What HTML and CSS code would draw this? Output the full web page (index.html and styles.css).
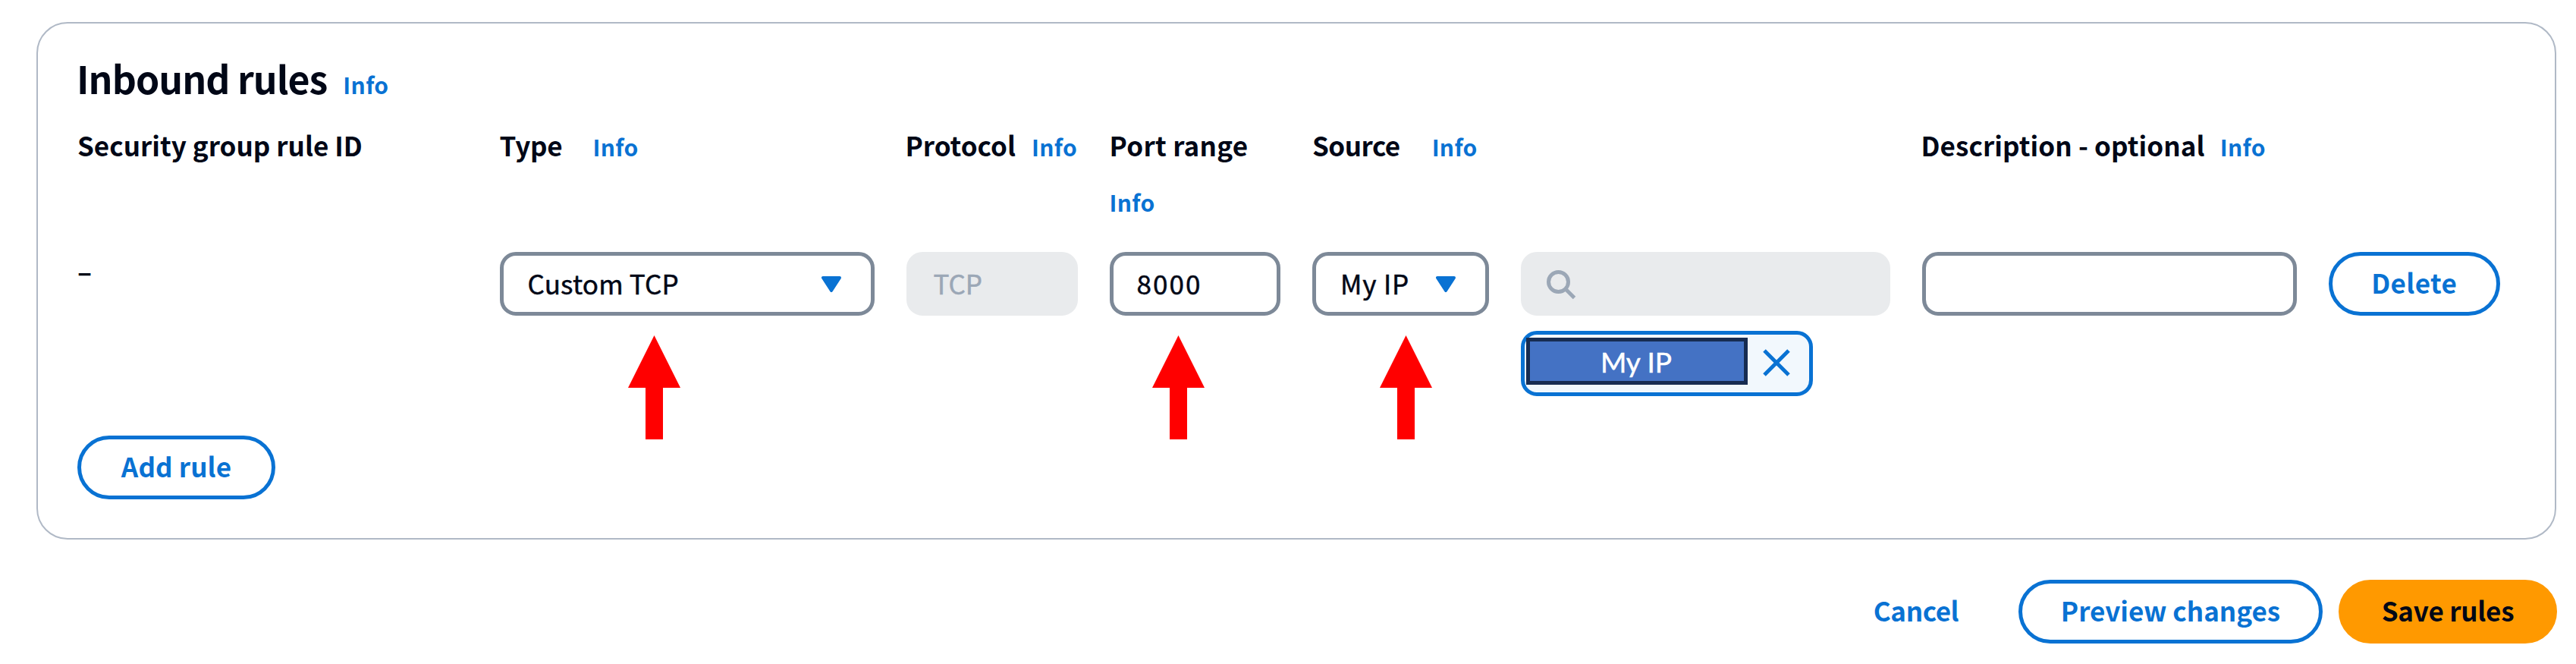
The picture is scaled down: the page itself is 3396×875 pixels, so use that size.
FILE: index.html
```
<!DOCTYPE html>
<html lang="en">
<head>
<meta charset="utf-8">
<title>Edit inbound rules</title>
<link rel="stylesheet" href="styles.css">
</head>
<body>
<main class="page">
  <section class="panel">
    <header class="panel-header">
      <h2 class="title">Inbound rules</h2>
      <a class="info title-info">Info</a>
    </header>

    <div class="grid labels">
      <div class="label label-id">Security group rule ID</div>
      <div class="label"><span class="label-type">Type</span><a class="info info-type">Info</a></div>
      <div class="label"><span class="label-protocol">Protocol</span><a class="info info-protocol">Info</a></div>
      <div class="label"><span class="label-port">Port range</span><a class="info info-port">Info</a></div>
      <div class="label label-wide"><span class="label-source">Source</span><a class="info info-source">Info</a></div>
      <div class="label"><span class="label-description">Description - optional</span><a class="info info-description">Info</a></div>
    </div>

    <div class="grid rule">
      <div class="rule-id">–</div>
      <div class="cell">
        <div class="field select">
          <span class="value-type">Custom TCP</span>
          <svg class="caret" viewBox="0 0 26 21"><path d="M2 2h22L13 19z"/></svg>
        </div>
        <svg class="arrow arrow-type" viewBox="0 0 69 137"><path d="M34.500 0L69 69H46V137H23V69H0z"/></svg>
      </div>
      <div class="cell"><div class="field disabled">TCP</div></div>
      <div class="cell">
        <div class="field"><span class="value-port">8000</span></div>
        <svg class="arrow arrow-port" viewBox="0 0 69 137"><path d="M34.500 0L69 69H46V137H23V69H0z"/></svg>
      </div>
      <div class="cell">
        <div class="field select">
          <span class="value-source">My IP</span>
          <svg class="caret" viewBox="0 0 26 21"><path d="M2 2h22L13 19z"/></svg>
        </div>
        <svg class="arrow arrow-source" viewBox="0 0 69 137"><path d="M34.500 0L69 69H46V137H23V69H0z"/></svg>
      </div>
      <div class="cell">
        <div class="field disabled search">
          <svg class="search-icon" viewBox="0 0 39 39"><circle cx="15.500" cy="15.500" r="13"/><path d="M25 25L36.500 36.500"/></svg>
        </div>
        <div class="token">
          <span class="token-label">My IP</span>
          <svg class="close" viewBox="0 0 36 36"><path d="M2 2L34 34M34 2L2 34"/></svg>
        </div>
      </div>
      <div class="cell"><div class="field"></div></div>
      <div class="cell"><button class="button delete">Delete</button></div>
    </div>

    <button class="button add">Add rule</button>
  </section>

  <footer class="actions">
    <button class="button link">Cancel</button>
    <button class="button preview">Preview changes</button>
    <button class="button primary">Save rules</button>
  </footer>
</main>
</body>
</html>
```
FILE: styles.css
```
* { box-sizing: border-box; }

body {
  margin: 0;
  background: #fff;
  color: #000716;
  font: 400 35px/40px "Noto Sans CJK JP", "Open Sans", sans-serif;
}

.page {
  height: 875px;
  padding: 29px 26px 0 48px;
  overflow: hidden;
}

.panel {
  height: 682px;
  padding: 41px 71px 0 52px;
  border: 2px solid #b0b9c6;
  border-radius: 41px;
}

.panel-header {
  display: flex;
  align-items: baseline;
  height: 60px;
  margin-bottom: 23px;
}

.title {
  margin: 0 0 0 -1px;
  font-size: 50px;
  line-height: 60px;
  font-weight: 700;
  letter-spacing: -0.95px;
}

.info {
  color: #0972d3;
  font-size: 30px;
  font-weight: 700;
  letter-spacing: 0.35px;
}

.title-info { margin-left: 21px; }

.grid {
  display: grid;
  grid-template-columns: 514.500px 494px 226px 225.500px 233px 486.500px 494px 226.500px;
  column-gap: 42px;
}

.labels {
  height: 144px;
  margin-bottom: 33px;
}

.label {
  display: flex;
  flex-wrap: wrap;
  align-items: baseline;
  align-content: flex-start;
  font-weight: 700;
  line-height: 72px;
  white-space: nowrap;
}

.label-wide { grid-column: span 2; }
.label-id { letter-spacing: 0.02px; }
.label-type { letter-spacing: -0.2px; }
.label-port { letter-spacing: 0.27px; }
.label-source { letter-spacing: -0.5px; }
.label-description { letter-spacing: 0.1px; margin-left: -1px; }
.label-protocol { margin-left: -1px; }
.info-type { margin-left: 40px; }
.info-protocol { margin-left: 21px; }
.info-port { width: 100%; padding-top: 3px; }
.info-source { margin-left: 42px; }
.info-description { margin-left: 20px; }

.rule { height: 190px; }
.rule-id { padding-top: 5px; font-weight: 700; }
.cell { position: relative; }

.field {
  display: flex;
  align-items: center;
  height: 84px;
  padding: 0 31px 2px 31px;
  border: 5px solid #7d8998;
  border-radius: 21px;
  -webkit-text-stroke: 0.5px currentColor;
}

.select {
  justify-content: space-between;
  padding: 0 39px 3px 32px;
}

.value-type { letter-spacing: 0.2px; }
.value-source { letter-spacing: 0.8px; }
.value-port { letter-spacing: 2.1px; }

.disabled {
  border-color: #e9ebed;
  background: #e9ebed;
  color: #9ba7b6;
}

.search { padding: 3px 0 0 29px; }

.caret {
  width: 26px;
  height: 21px;
  margin-top: 3px;
  fill: #0972d3;
  stroke: #0972d3;
  stroke-width: 4px;
  stroke-linejoin: round;
}

.search-icon {
  width: 39px;
  height: 39px;
  fill: none;
  stroke: #9ba7b6;
  stroke-width: 5px;
}

/* Callout arrows pointing up at the fields to fill in */
.arrow {
  position: absolute;
  top: 110px;
  width: 69px;
  height: 137px;
  fill: #f00;
}

.arrow-type { left: 169.500px; }
.arrow-port { left: 56px; }
.arrow-source { left: 88.500px; }

.token {
  display: flex;
  width: 385px;
  height: 86px;
  margin-top: 20px;
  padding: 4px 0 0 2px;
  border: 5px solid #0972d3;
  border-radius: 21px;
  background: #f2f8fd;
}

.token-label {
  width: 292px;
  height: 62px;
  padding-right: 2px;
  border: 5px solid #172c51;
  background: #4472c4;
  color: #fff;
  font: 400 37px/53px Lato, sans-serif;
  text-align: center;
  -webkit-text-stroke: 0.5px currentColor;
}

.close {
  width: 36px;
  height: 36px;
  margin: 15px 0 0 20px;
  stroke: #0972d3;
  stroke-width: 5px;
}

.button {
  display: block;
  height: 84px;
  padding: 0 0 4px;
  border: 5px solid #0972d3;
  border-radius: 42px;
  background: #fff;
  color: #0972d3;
  font: inherit;
  font-weight: 700;
  text-align: center;
  white-space: nowrap;
}

.delete { width: 226.500px; letter-spacing: 0.4px; }
.add { width: 261px; margin-top: 52px; letter-spacing: 0.12px; }

.actions {
  display: flex;
  justify-content: flex-end;
  margin: 53px -1px 0 0;
}

.link {
  width: 190px;
  margin-right: 40px;
  border-color: transparent;
  letter-spacing: -0.4px;
}

.preview { width: 401px; margin-right: 21px; }

.primary {
  width: 288px;
  border-color: #f90;
  background: #f90;
  color: #000716;
  letter-spacing: -0.23px;
}
```
